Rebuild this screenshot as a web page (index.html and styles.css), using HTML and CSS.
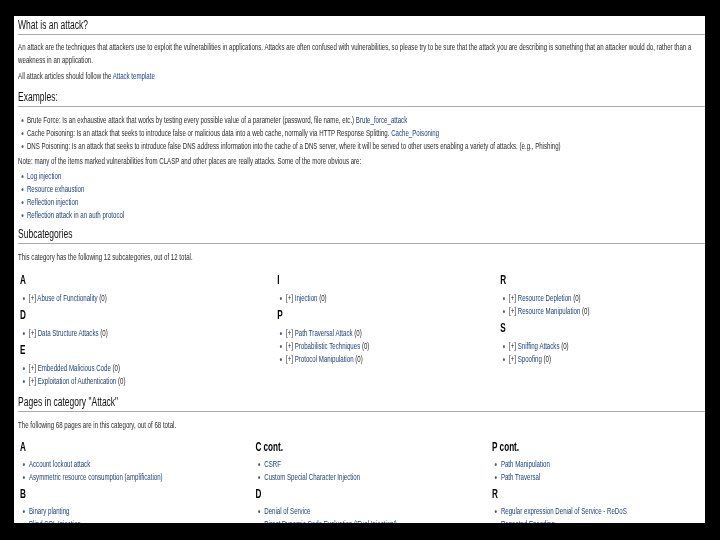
FILE: index.html
```html
<!DOCTYPE html>
<html lang="en">
<head>
<meta charset="utf-8">
<title>Category: Attack</title>
<link rel="stylesheet" href="styles.css">
</head>
<body>
<div class="frame">
<main class="page">
  <h2 class="first">What is an attack?</h2>
  <p class="lead">An attack are the techniques that attackers use to exploit the vulnerabilities in applications. Attacks are often confused with vulnerabilities, so please try to be sure that the attack you are describing is something that an attacker would do, rather than a weakness in an application.</p>
  <p>All attack articles should follow the <a href="#">Attack template</a></p>
  <h2>Examples:</h2>
  <ul class="lead">
    <li>Brute Force: Is an exhaustive attack that works by testing every possible value of a parameter (password, file name, etc.) <a href="#">Brute_force_attack</a></li>
    <li>Cache Poisoning: Is an attack that seeks to introduce false or malicious data into a web cache, normally via HTTP Response Splitting. <a href="#">Cache_Poisoning</a></li>
    <li>DNS Poisoning: Is an attack that seeks to introduce false DNS address information into the cache of a DNS server, where it will be served to other users enabling a variety of attacks. (e.g., Phishing)</li>
  </ul>
  <p class="note">Note: many of the items marked vulnerabilities from CLASP and other places are really attacks. Some of the more obvious are:</p>
  <ul>
    <li><a href="#">Log injection</a></li>
    <li><a href="#">Resource exhaustion</a></li>
    <li><a href="#">Reflection injection</a></li>
    <li><a href="#">Reflection attack in an auth protocol</a></li>
  </ul>
  <h2>Subcategories</h2>
  <p class="lead">This category has the following 12 subcategories, out of 12 total.</p>
  <div class="cols subcats">
    <section>
      <h3>A</h3>
      <ul><li>[+] <a href="#">Abuse of Functionality</a> (0)</li></ul>
      <h3>D</h3>
      <ul><li>[+] <a href="#">Data Structure Attacks</a> (0)</li></ul>
      <h3>E</h3>
      <ul>
        <li>[+] <a href="#">Embedded Malicious Code</a> (0)</li>
        <li>[+] <a href="#">Exploitation of Authentication</a> (0)</li>
      </ul>
    </section>
    <section>
      <h3>I</h3>
      <ul><li>[+] <a href="#">Injection</a> (0)</li></ul>
      <h3>P</h3>
      <ul>
        <li>[+] <a href="#">Path Traversal Attack</a> (0)</li>
        <li>[+] <a href="#">Probabilistic Techniques</a> (0)</li>
        <li>[+] <a href="#">Protocol Manipulation</a> (0)</li>
      </ul>
    </section>
    <section>
      <h3>R</h3>
      <ul>
        <li>[+] <a href="#">Resource Depletion</a> (0)</li>
        <li>[+] <a href="#">Resource Manipulation</a> (0)</li>
      </ul>
      <h3>S</h3>
      <ul>
        <li>[+] <a href="#">Sniffing Attacks</a> (0)</li>
        <li>[+] <a href="#">Spoofing</a> (0)</li>
      </ul>
    </section>
  </div>
  <h2>Pages in category "Attack"</h2>
  <p class="lead">The following 68 pages are in this category, out of 68 total.</p>
  <div class="cols pages">
    <section>
      <h3>A</h3>
      <ul>
        <li><a href="#">Account lockout attack</a></li>
        <li><a href="#">Asymmetric resource consumption (amplification)</a></li>
      </ul>
      <h3>B</h3>
      <ul>
        <li><a href="#">Binary planting</a></li>
        <li><a href="#">Blind SQL Injection</a></li>
      </ul>
    </section>
    <section>
      <h3>C cont.</h3>
      <ul>
        <li><a href="#">CSRF</a></li>
        <li><a href="#">Custom Special Character Injection</a></li>
      </ul>
      <h3>D</h3>
      <ul>
        <li><a href="#">Denial of Service</a></li>
        <li><a href="#">Direct Dynamic Code Evaluation ('Eval Injection')</a></li>
      </ul>
    </section>
    <section>
      <h3>P cont.</h3>
      <ul>
        <li><a href="#">Path Manipulation</a></li>
        <li><a href="#">Path Traversal</a></li>
      </ul>
      <h3>R</h3>
      <ul>
        <li><a href="#">Regular expression Denial of Service - ReDoS</a></li>
        <li><a href="#">Repeated Encoding</a></li>
      </ul>
    </section>
  </div>
</main>
</div>
</body>
</html>
```
FILE: styles.css
```css
* { box-sizing: border-box; }
html, body { margin: 0; height: 100%; }
body { background: #000; padding: 16px 15px 16px 14px; overflow: hidden; }
.frame { height: 507px; background: #fff; overflow: hidden; }
.page {
  width: 1016px;
  padding: 0 0 0 6px;
  transform: scaleX(0.68);
  transform-origin: left top;
  font: 9px/13px "Liberation Sans", Arial, sans-serif;
  color: #2a2a2a;
  filter: blur(0.3px);
}
h2 {
  margin: 5px 0 0;
  height: 19px;
  font-size: 12.5px;
  font-weight: 400;
  line-height: 19px;
  color: #111;
  border-bottom: 1px solid #aaa;
}
h2.first { margin-top: 0; }
ul + h2 { margin-top: 3px; }
p { margin: 3px 0 0; }
.note { margin-top: 2px; }
.lead { margin-top: 7px; }
h2.first + .lead { margin-top: 6px; }
ul { list-style: none; margin: 2px 0 0; padding: 0 0 0 6px; }
li { position: relative; padding-left: 7px; }
li::before {
  content: "";
  position: absolute;
  left: -1px;
  top: 5px;
  width: 3px;
  height: 3px;
  border-radius: 50%;
  background: #4a6078;
}
.cols li::before { left: -2px; }
a { color: #1c3f78; text-decoration: none; }
.cols { display: grid; padding-left: 3px; }
.subcats { margin-top: 9px; grid-template-columns: 378px 328px 1fr; }
.pages { margin-top: 8px; grid-template-columns: 346px 348px 1fr; }
h3 { margin: 3px 0 0; font-size: 12px; line-height: 14px; font-weight: 700; color: #000; }
section h3:first-child { margin-top: 0; }
h3 + ul { margin-top: 5px; }
.pages h3 + ul { margin-top: 4px; }
```
